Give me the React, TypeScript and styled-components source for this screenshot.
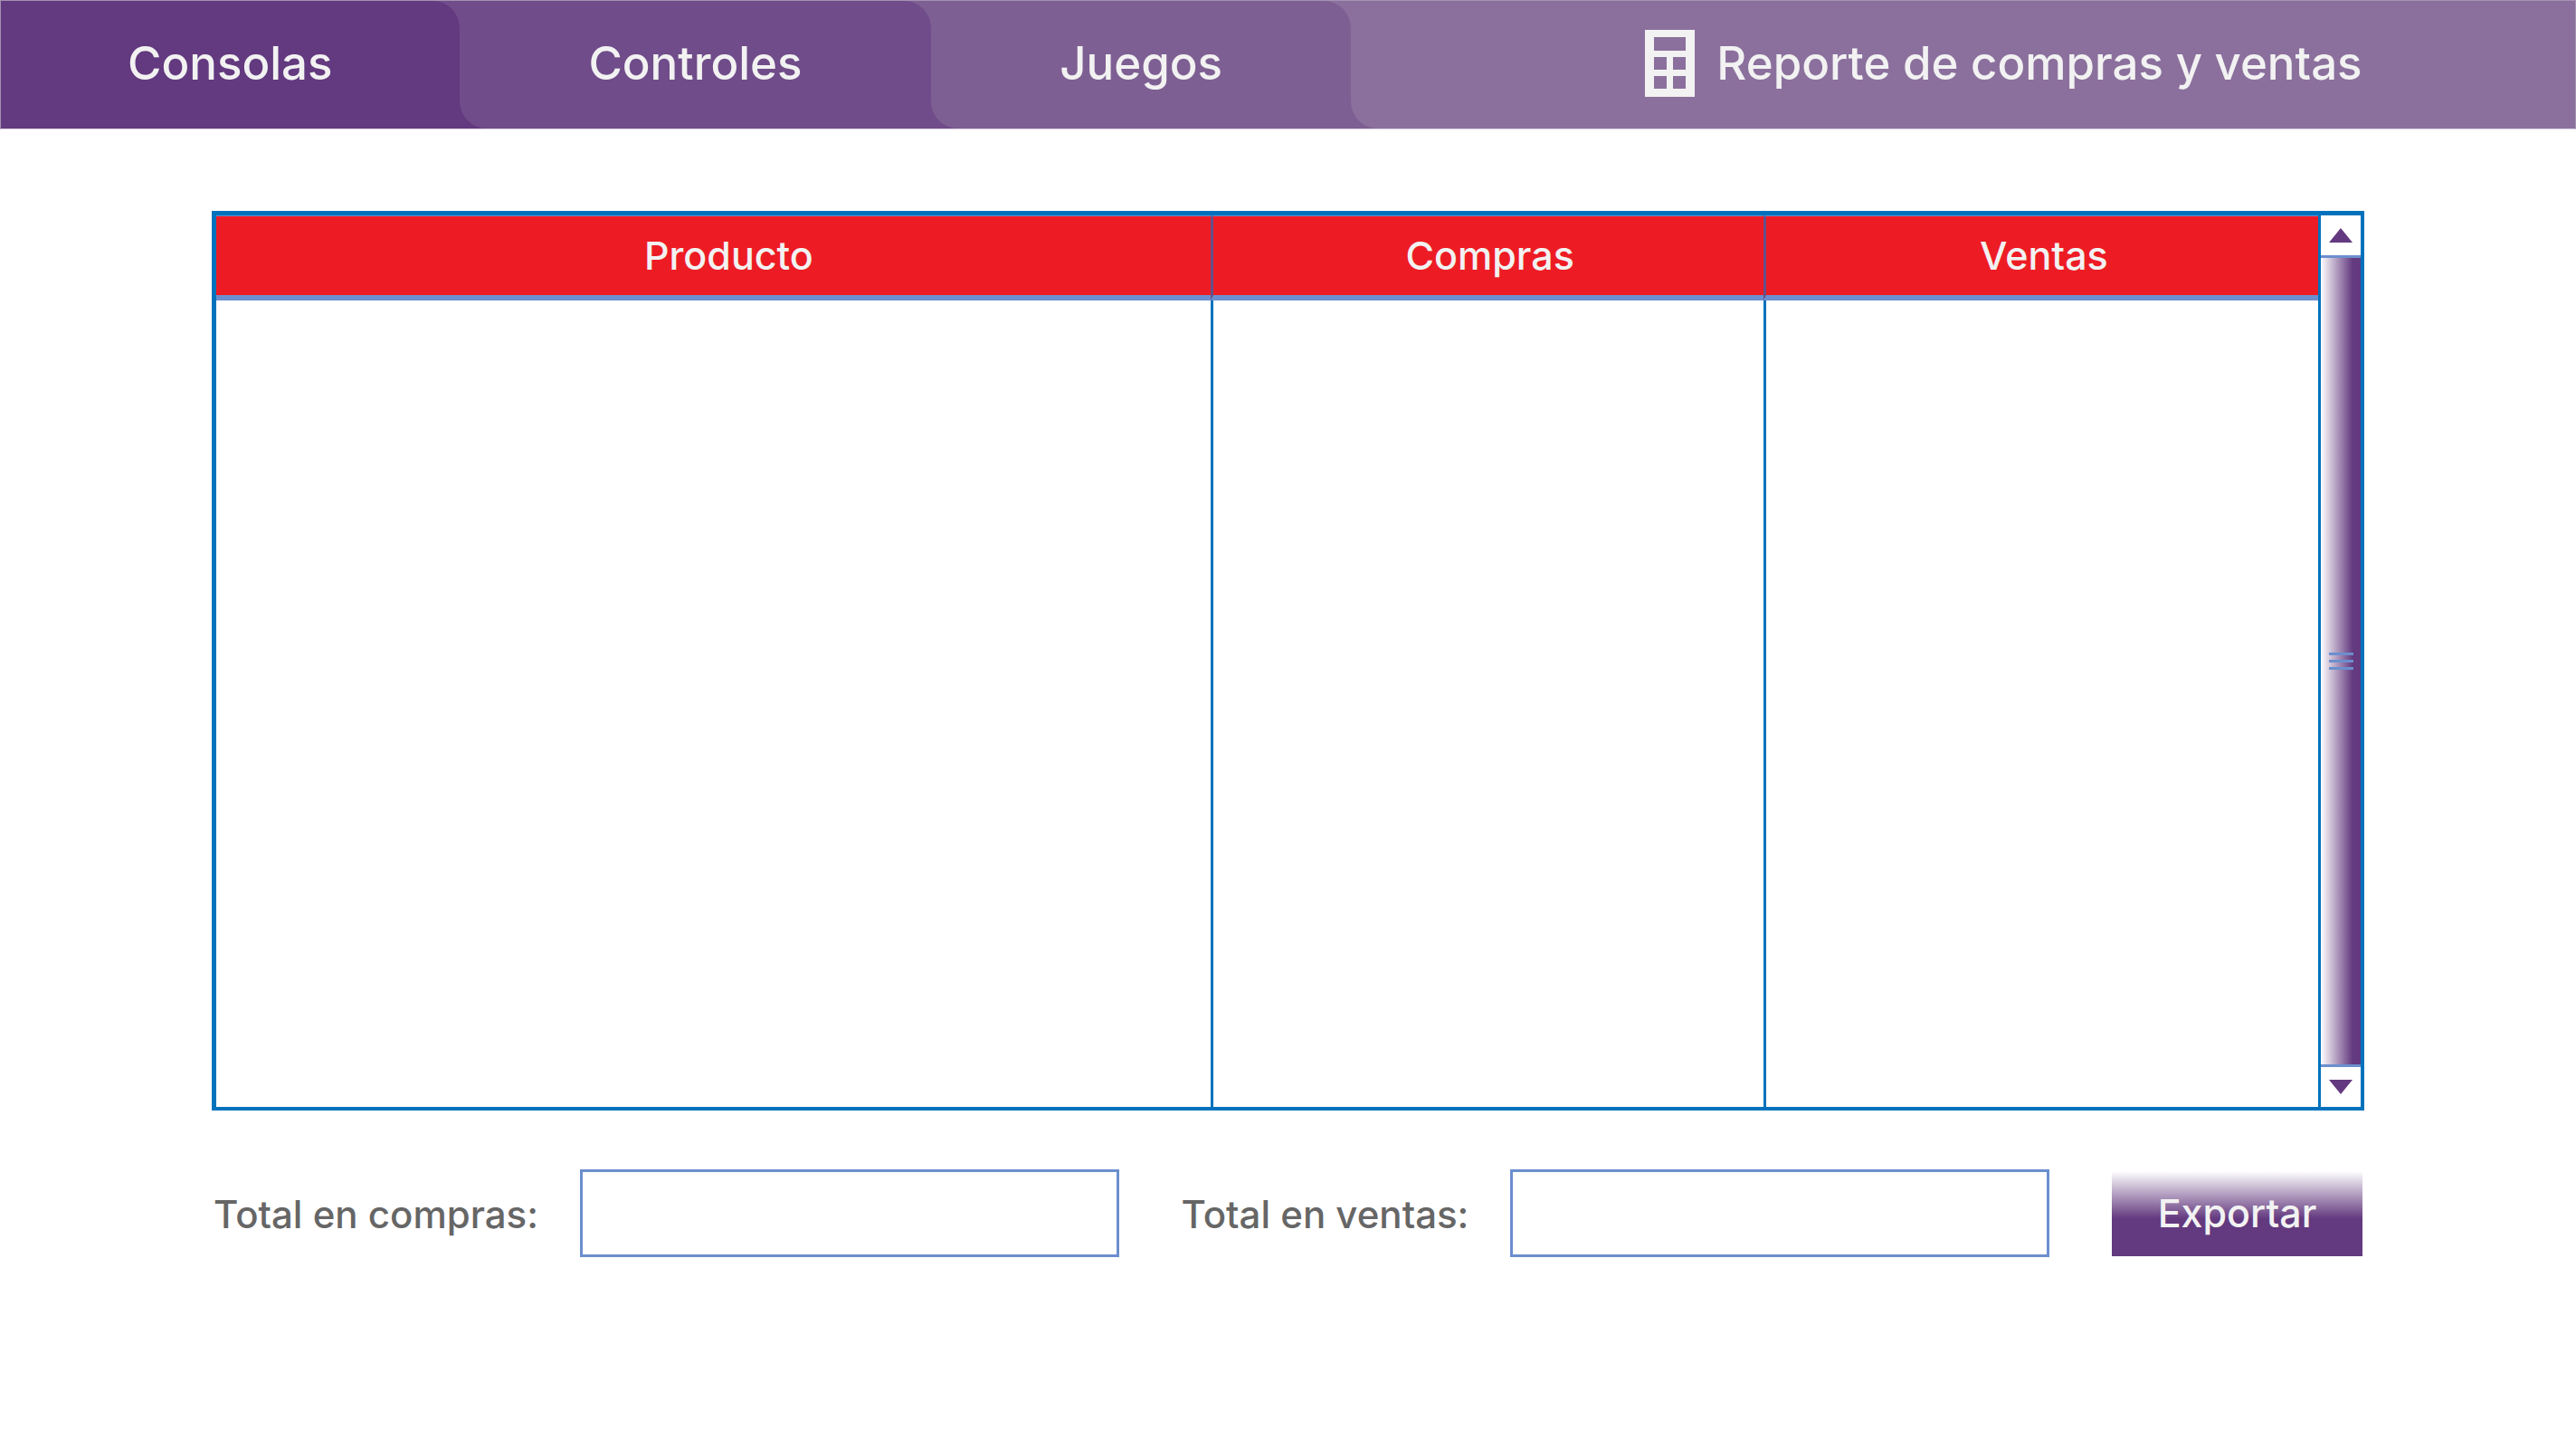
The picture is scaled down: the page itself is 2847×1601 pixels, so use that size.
import React from "react";
import styled, { createGlobalStyle } from "styled-components";

const color = {
  plum: "#63397f",
  tabs: ["#63397f", "#704c8a", "#7e5f93", "#8b709d"],
  frame: "#0072bc",
  soft: "#6b8fce",
  red: "#ed1c24",
  light: "#f2f2f2",
  label: "#666666",
};

const GlobalStyle = createGlobalStyle`
  *, *::before, *::after { box-sizing: border-box; }
  body {
    margin: 0;
    background: #fff;
    font-family: Inter, "Liberation Sans", Arial, sans-serif;
    font-weight: 500;
  }
  button, input { font: inherit; }
`;

const Nav = styled.nav`
  display: grid;
  grid-template-columns: 507fr 522fr 464fr 1354fr;
  height: 143px;
  border: 1px solid #a592b3;
  border-bottom-color: #d9cfe0;
`;

/* The two halves show through the rounded corners of the tab. */
const TabSlot = styled.div<{ $before: string; $after: string }>`
  display: flex;
  background: linear-gradient(
    to right,
    ${(p) => p.$before} 50%,
    ${(p) => p.$after} 50%
  );
`;

const Tab = styled.button<{ $bg: string; $first?: boolean; $last?: boolean }>`
  flex: 1;
  display: flex;
  align-items: center;
  justify-content: center;
  gap: 24px;
  padding: 0 0 4px ${(p) => (p.$last ? "90px" : "0")};
  border: 0;
  border-radius: 0 ${(p) => (p.$last ? "0" : "30px")} 0
    ${(p) => (p.$first ? "0" : "30px")};
  background: ${(p) => p.$bg};
  color: ${color.light};
  font-size: 51px;
  line-height: 60px;
  white-space: nowrap;
  cursor: pointer;
`;

const Main = styled.main`
  padding: 90px 234px;
`;

const Frame = styled.section`
  display: flex;
  border: solid ${color.frame};
  border-width: 5px 4px 4px 5px;
`;

const Table = styled.table`
  flex: 1;
  border-collapse: separate;
  border-spacing: 0;
  table-layout: fixed;
`;

const HeadCell = styled.th<{ $width: string; $indent?: boolean }>`
  width: ${(p) => p.$width};
  height: 94px;
  padding: 0 0 2px ${(p) => (p.$indent ? "34px" : "4px")};
  border-top: 1px solid ${color.soft};
  border-bottom: 6px solid ${color.soft};
  background: ${color.red};
  color: ${color.light};
  font-size: 43px;
  font-weight: 500;
  line-height: 50px;
  text-align: center;

  & + & {
    border-left: 3px solid #64508a;
  }
`;

const BodyCell = styled.td`
  height: 891px;
  padding: 0;

  & + & {
    border-left: 3px solid ${color.frame};
  }
`;

const ScrollBar = styled.div`
  display: flex;
  flex-direction: column;
  width: 47px;
  border-left: 3px solid ${color.frame};
`;

const Arrow = styled.button`
  display: flex;
  align-items: center;
  justify-content: center;
  height: 44px;
  padding: 0;
  border: 0;
  background: #fff;
  color: ${color.plum};
  cursor: pointer;
`;

const Thumb = styled.div`
  flex: 1;
  display: flex;
  align-items: center;
  justify-content: center;
  border-top: 3px solid ${color.soft};
  border-bottom: 3px solid ${color.soft};
  background: linear-gradient(to right, #fff, ${color.plum} 80%);
`;

const Grip = styled.div`
  display: grid;
  gap: 5px;
`;

const GripLine = styled.span`
  width: 27px;
  height: 3px;
  background: ${color.soft};
`;

const Totals = styled.form`
  display: flex;
  align-items: center;
  margin: 65px 2px 0 2px;
`;

const Field = styled.div`
  flex: 1 1 auto;
  display: flex;
  align-items: center;
  justify-content: space-between;
  margin-right: 69px;
`;

const Label = styled.label`
  padding-top: 2px;
  color: ${color.label};
  font-size: 42px;
  line-height: 50px;
  white-space: nowrap;
`;

const Input = styled.input`
  width: 596px;
  height: 97px;
  padding: 0 24px;
  border: 3px solid ${color.soft};
  border-radius: 0;
  background: #fff;
  color: ${color.label};
  font-size: 42px;
  outline: none;
`;

const Export = styled.button`
  flex: none;
  width: 277px;
  height: 94px;
  padding: 0 0 2px;
  border: 0;
  background: linear-gradient(to bottom, #fff, ${color.plum} 56%);
  color: ${color.light};
  font-size: 43px;
  line-height: 50px;
  cursor: pointer;
`;

const CalculatorIcon = () => (
  <svg width="55" height="74" viewBox="0 0 55 74" aria-hidden="true">
    <path
      fill={color.light}
      fillRule="evenodd"
      d="M0 0H55V74H0ZM10 8V23H45V8ZM10 30V44H24V30ZM31 30V44H45V30ZM10 51V65H24V51ZM31 51V65H45V51Z"
    />
  </svg>
);

const Triangle = ({ down }: { down?: boolean }) => (
  <svg width="26" height="16" viewBox="0 0 26 16" aria-hidden="true">
    <path fill="currentColor" d={down ? "M0 0H26L13 16Z" : "M0 16H26L13 0Z"} />
  </svg>
);

const tabs = ["Consolas", "Controles", "Juegos", "Reporte de compras y ventas"];

export default function App() {
  const last = tabs.length - 1;
  return (
    <>
      <GlobalStyle />
      <Nav>
        {tabs.map((name, i) => (
          <TabSlot
            key={name}
            $before={color.tabs[Math.max(i - 1, 0)]}
            $after={color.tabs[Math.min(i + 1, last)]}
          >
            <Tab
              type="button"
              $bg={color.tabs[i]}
              $first={i === 0}
              $last={i === last}
            >
              {i === last && <CalculatorIcon />}
              <span>{name}</span>
            </Tab>
          </TabSlot>
        ))}
      </Nav>
      <Main>
        <Frame>
          <Table>
            <thead>
              <tr>
                <HeadCell $width="47.3%" $indent>
                  Producto
                </HeadCell>
                <HeadCell $width="26.3%">Compras</HeadCell>
                <HeadCell $width="26.4%">Ventas</HeadCell>
              </tr>
            </thead>
            <tbody>
              <tr>
                <BodyCell />
                <BodyCell />
                <BodyCell />
              </tr>
            </tbody>
          </Table>
          <ScrollBar>
            <Arrow type="button" aria-label="Subir">
              <Triangle />
            </Arrow>
            <Thumb>
              <Grip>
                <GripLine />
                <GripLine />
                <GripLine />
              </Grip>
            </Thumb>
            <Arrow type="button" aria-label="Bajar">
              <Triangle down />
            </Arrow>
          </ScrollBar>
        </Frame>
        <Totals onSubmit={(e) => e.preventDefault()}>
          <Field>
            <Label htmlFor="compras">Total en compras:</Label>
            <Input id="compras" type="text" />
          </Field>
          <Field>
            <Label htmlFor="ventas">Total en ventas:</Label>
            <Input id="ventas" type="text" />
          </Field>
          <Export type="submit">Exportar</Export>
        </Totals>
      </Main>
    </>
  );
}
